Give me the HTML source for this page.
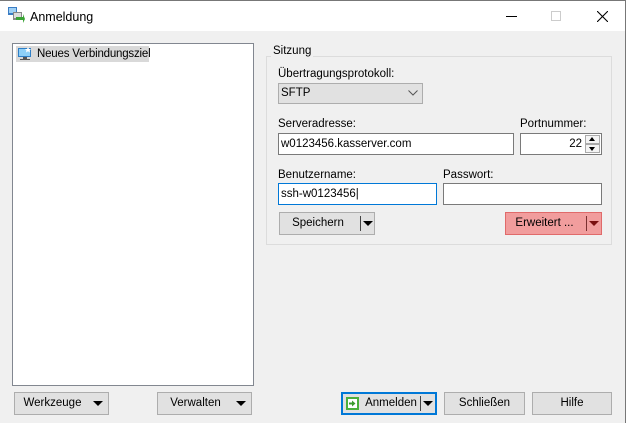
<!DOCTYPE html>
<html><head><style>
*{box-sizing:border-box;margin:0;padding:0}
body{width:626px;height:423px;background:#f0f0f0;font-family:"Liberation Sans",sans-serif;font-size:11.5px;color:#000;position:relative;overflow:hidden;border-top:1px solid #777;border-right:1px solid #777}
.a{position:absolute}
.t{position:absolute;white-space:nowrap;line-height:14px}
.in{position:absolute;background:#fff;border:1px solid #7a7a7a;height:22px;line-height:20px;padding-left:2px}
.btn{position:absolute;background:#e1e1e1;border:1px solid #adadad;height:23px;line-height:21px;text-align:center}
.dd{position:absolute;top:5px;width:0;height:0;border-left:5px solid transparent;border-right:5px solid transparent;border-top:5px solid #000}
</style></head><body>
<div class="a" style="left:0;top:0;width:625px;height:30px;background:#fff"></div>
<svg class="a" style="left:7px;top:5px" width="18" height="18" viewBox="0 0 18 18"><rect x="1" y="1" width="9" height="8" fill="#3a7cc4"/><rect x="2" y="2" width="7" height="5" fill="#9fd0f5"/><rect x="6" y="6" width="9" height="8" fill="#888"/><rect x="7" y="7" width="7" height="5" fill="#ddd"/><path d="M9 11 L16 11 L16 8 L18 13 L16 17 L16 14 L9 14Z" fill="#3aa335"/></svg>
<div class="t" style="left:30px;top:9px;font-size:12.5px">Anmeldung</div>
<div class="a" style="left:506px;top:15px;width:11px;height:1px;background:#000"></div>
<div class="a" style="left:551px;top:10px;width:10px;height:10px;border:1px solid #ccc"></div>
<svg class="a" style="left:597px;top:10px" width="11" height="11"><path d="M0 0L11 11M11 0L0 11" stroke="#000" stroke-width="1.1"/></svg>

<div class="a" style="left:12px;top:42px;width:242px;height:343px;background:#fff;border:1px solid #828790"></div>
<div class="a" style="left:16px;top:45px;width:133px;height:16px;background:#d9d9d9"></div>
<svg class="a" style="left:17px;top:45px" width="16" height="16"><rect x="1" y="2" width="13" height="9" fill="#2f7fc7"/><rect x="2" y="3" width="11" height="7" fill="#8ed0f8"/><rect x="6" y="11" width="4" height="2" fill="#555"/><rect x="3" y="13" width="10" height="1" fill="#555"/><path d="M11 1 L12 3 L14 3 L12.5 4.5 L13 6.5 L11 5.3 L9 6.5 L9.5 4.5 L8 3 L10 3Z" fill="#fff"/></svg>
<div class="t" style="left:37px;top:46px;letter-spacing:-0.2px">Neues Verbindungsziel</div>

<div class="a" style="left:266px;top:55px;width:346px;height:189px;border:1px solid #dcdcdc"></div>
<div class="t" style="left:271px;top:43px;background:#f0f0f0;padding:0 2px">Sitzung</div>
<div class="t" style="left:278px;top:66px">Übertragungsprotokoll:</div>
<div class="a" style="left:278px;top:82px;width:145px;height:21px;background:#e1e1e1;border:1px solid #adadad;line-height:19px;padding-left:2px">SFTP</div>
<svg class="a" style="left:408px;top:89px" width="10" height="6"><path d="M0.5 0.5L5 5L9.5 0.5" stroke="#555" fill="none"/></svg>

<div class="t" style="left:278px;top:116px">Serveradresse:</div>
<div class="in" style="left:278px;top:132px;width:236px">w0123456.kasserver.com</div>
<div class="t" style="left:520px;top:116px">Portnummer:</div>
<div class="in" style="left:520px;top:132px;width:82px;text-align:right;padding-right:19px">22</div>
<div class="a" style="left:585px;top:134px;width:15px;height:9px;border:1px solid #aaa;background:#f4f4f4"></div>
<div class="a" style="left:585px;top:143px;width:15px;height:9px;border:1px solid #aaa;background:#f4f4f4"></div>
<div class="a" style="left:589px;top:136px;border-left:3px solid transparent;border-right:3px solid transparent;border-bottom:4px solid #000"></div>
<div class="a" style="left:589px;top:146px;border-left:3px solid transparent;border-right:3px solid transparent;border-top:4px solid #000"></div>

<div class="t" style="left:278px;top:167px">Benutzername:</div>
<div class="in" style="left:278px;top:182px;width:159px;border-color:#0078d7">ssh-w0123456|</div>
<div class="t" style="left:443px;top:167px">Passwort:</div>
<div class="in" style="left:443px;top:182px;width:159px"></div>

<div class="btn" style="left:279px;top:211px;width:96px;padding-right:18px">Speichern</div>
<div class="a" style="left:360px;top:215px;width:1px;height:15px;background:#444"></div>
<div class="dd" style="left:363px;top:220px"></div>
<div class="btn" style="left:505px;top:211px;width:97px;background:#f19d9d;border-color:#e06a6a;padding-right:18px">Erweitert ...</div>
<div class="a" style="left:586px;top:215px;width:1px;height:15px;background:#7a3030"></div>
<div class="dd" style="left:589px;top:220px;border-top-color:#7a1010"></div>

<div class="btn" style="left:14px;top:391px;width:95px;padding-right:18px">Werkzeuge</div>
<div class="dd" style="left:93px;top:400px"></div>
<div class="btn" style="left:157px;top:391px;width:95px;padding-right:18px">Verwalten</div>
<div class="dd" style="left:236px;top:400px"></div>
<div class="btn" style="left:341px;top:391px;width:96px;border:2px solid #0078d7;line-height:19px;padding-left:20px;padding-right:16px">Anmelden</div>
<svg class="a" style="left:346px;top:396px" width="13" height="13"><rect x="0" y="0" width="13" height="13" fill="#4caf3c"/><rect x="2" y="2" width="9" height="9" fill="#fff"/><path d="M3 5.5h3v-2l3.5 3-3.5 3v-2H3z" fill="#3a9a2c"/></svg>
<div class="a" style="left:420px;top:395px;width:1px;height:15px;background:#444"></div>
<div class="dd" style="left:423px;top:400px"></div>
<div class="btn" style="left:444px;top:391px;width:81px">Schließen</div>
<div class="btn" style="left:532px;top:391px;width:80px">Hilfe</div>
</body></html>
